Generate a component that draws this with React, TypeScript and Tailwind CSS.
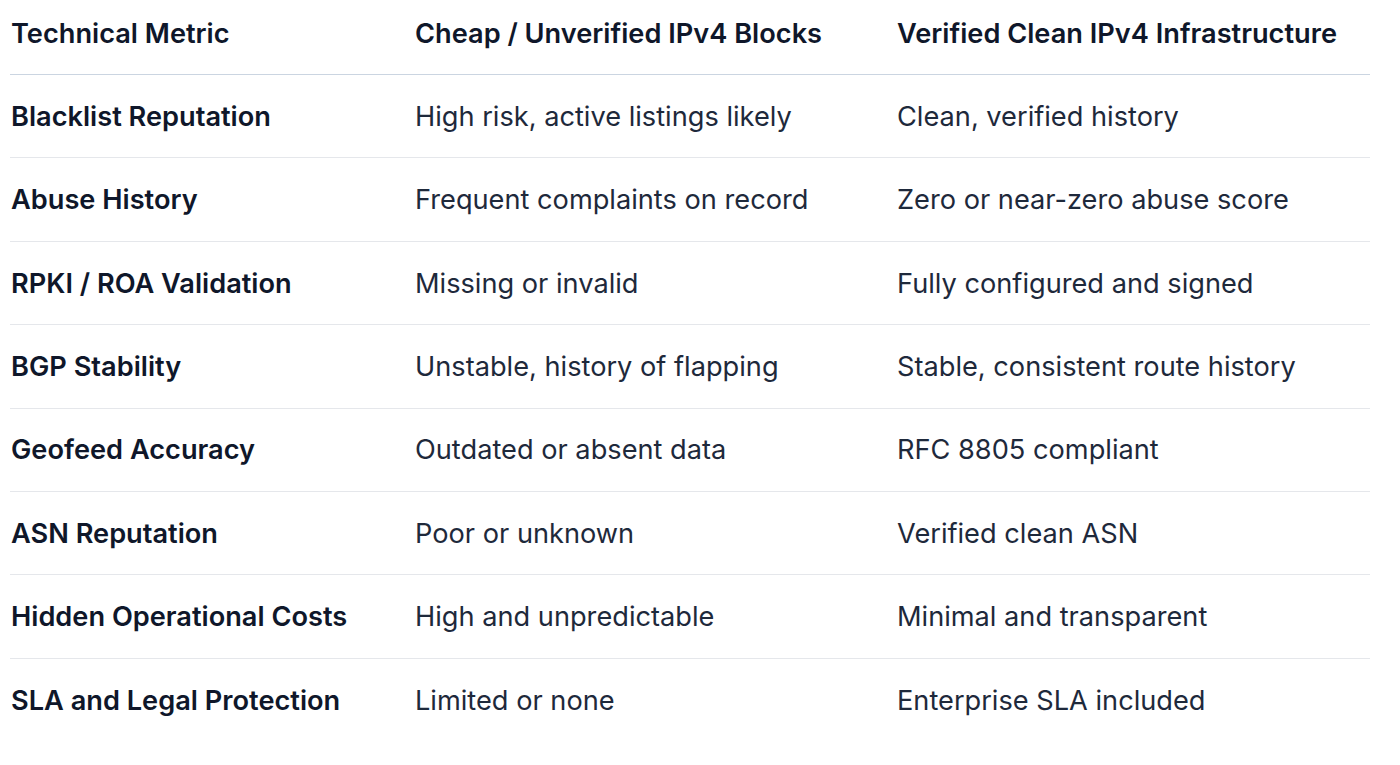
import { FC } from "react";

const rows = [
  ["Blacklist Reputation", "High risk, active listings likely", "Clean, verified history"],
  ["Abuse History", "Frequent complaints on record", "Zero or near-zero abuse score"],
  ["RPKI / ROA Validation", "Missing or invalid", "Fully configured and signed"],
  ["BGP Stability", "Unstable, history of flapping", "Stable, consistent route history"],
  ["Geofeed Accuracy", "Outdated or absent data", "RFC 8805 compliant"],
  ["ASN Reputation", "Poor or unknown", "Verified clean ASN"],
  ["Hidden Operational Costs", "High and unpredictable", "Minimal and transparent"],
  ["SLA and Legal Protection", "Limited or none", "Enterprise SLA included"],
];

const App: FC = () => {
  return (
    <div className="w-[1400px] h-[765px] bg-white overflow-hidden font-['Inter',sans-serif]">
      <div className="ml-[10px] w-[1360px]">
        <div className="grid grid-cols-[405px_482px_1fr] h-[75px] items-center pb-[6px] border-b-[1.5px] border-[#cbd5e1] text-[27.2px] font-semibold text-[#0f172a]">
          <div className="pl-px">Technical Metric</div>
          <div>Cheap / Unverified IPv4 Blocks</div>
          <div>Verified Clean IPv4 Infrastructure</div>
        </div>
        {rows.map((r, i) => (
          <div
            key={i}
            className={`grid grid-cols-[405px_482px_1fr] h-[83.4px] items-center pt-[2px] text-[27.2px] text-[#1e293b] ${
              i < rows.length - 1 ? "border-b-[1.5px] border-[#e5e7eb]" : ""
            }`}
          >
            <div className="pl-px font-semibold text-[#0f172a]">{r[0]}</div>
            <div>{r[1]}</div>
            <div>{r[2]}</div>
          </div>
        ))}
      </div>
    </div>
  );
};

export default App;
